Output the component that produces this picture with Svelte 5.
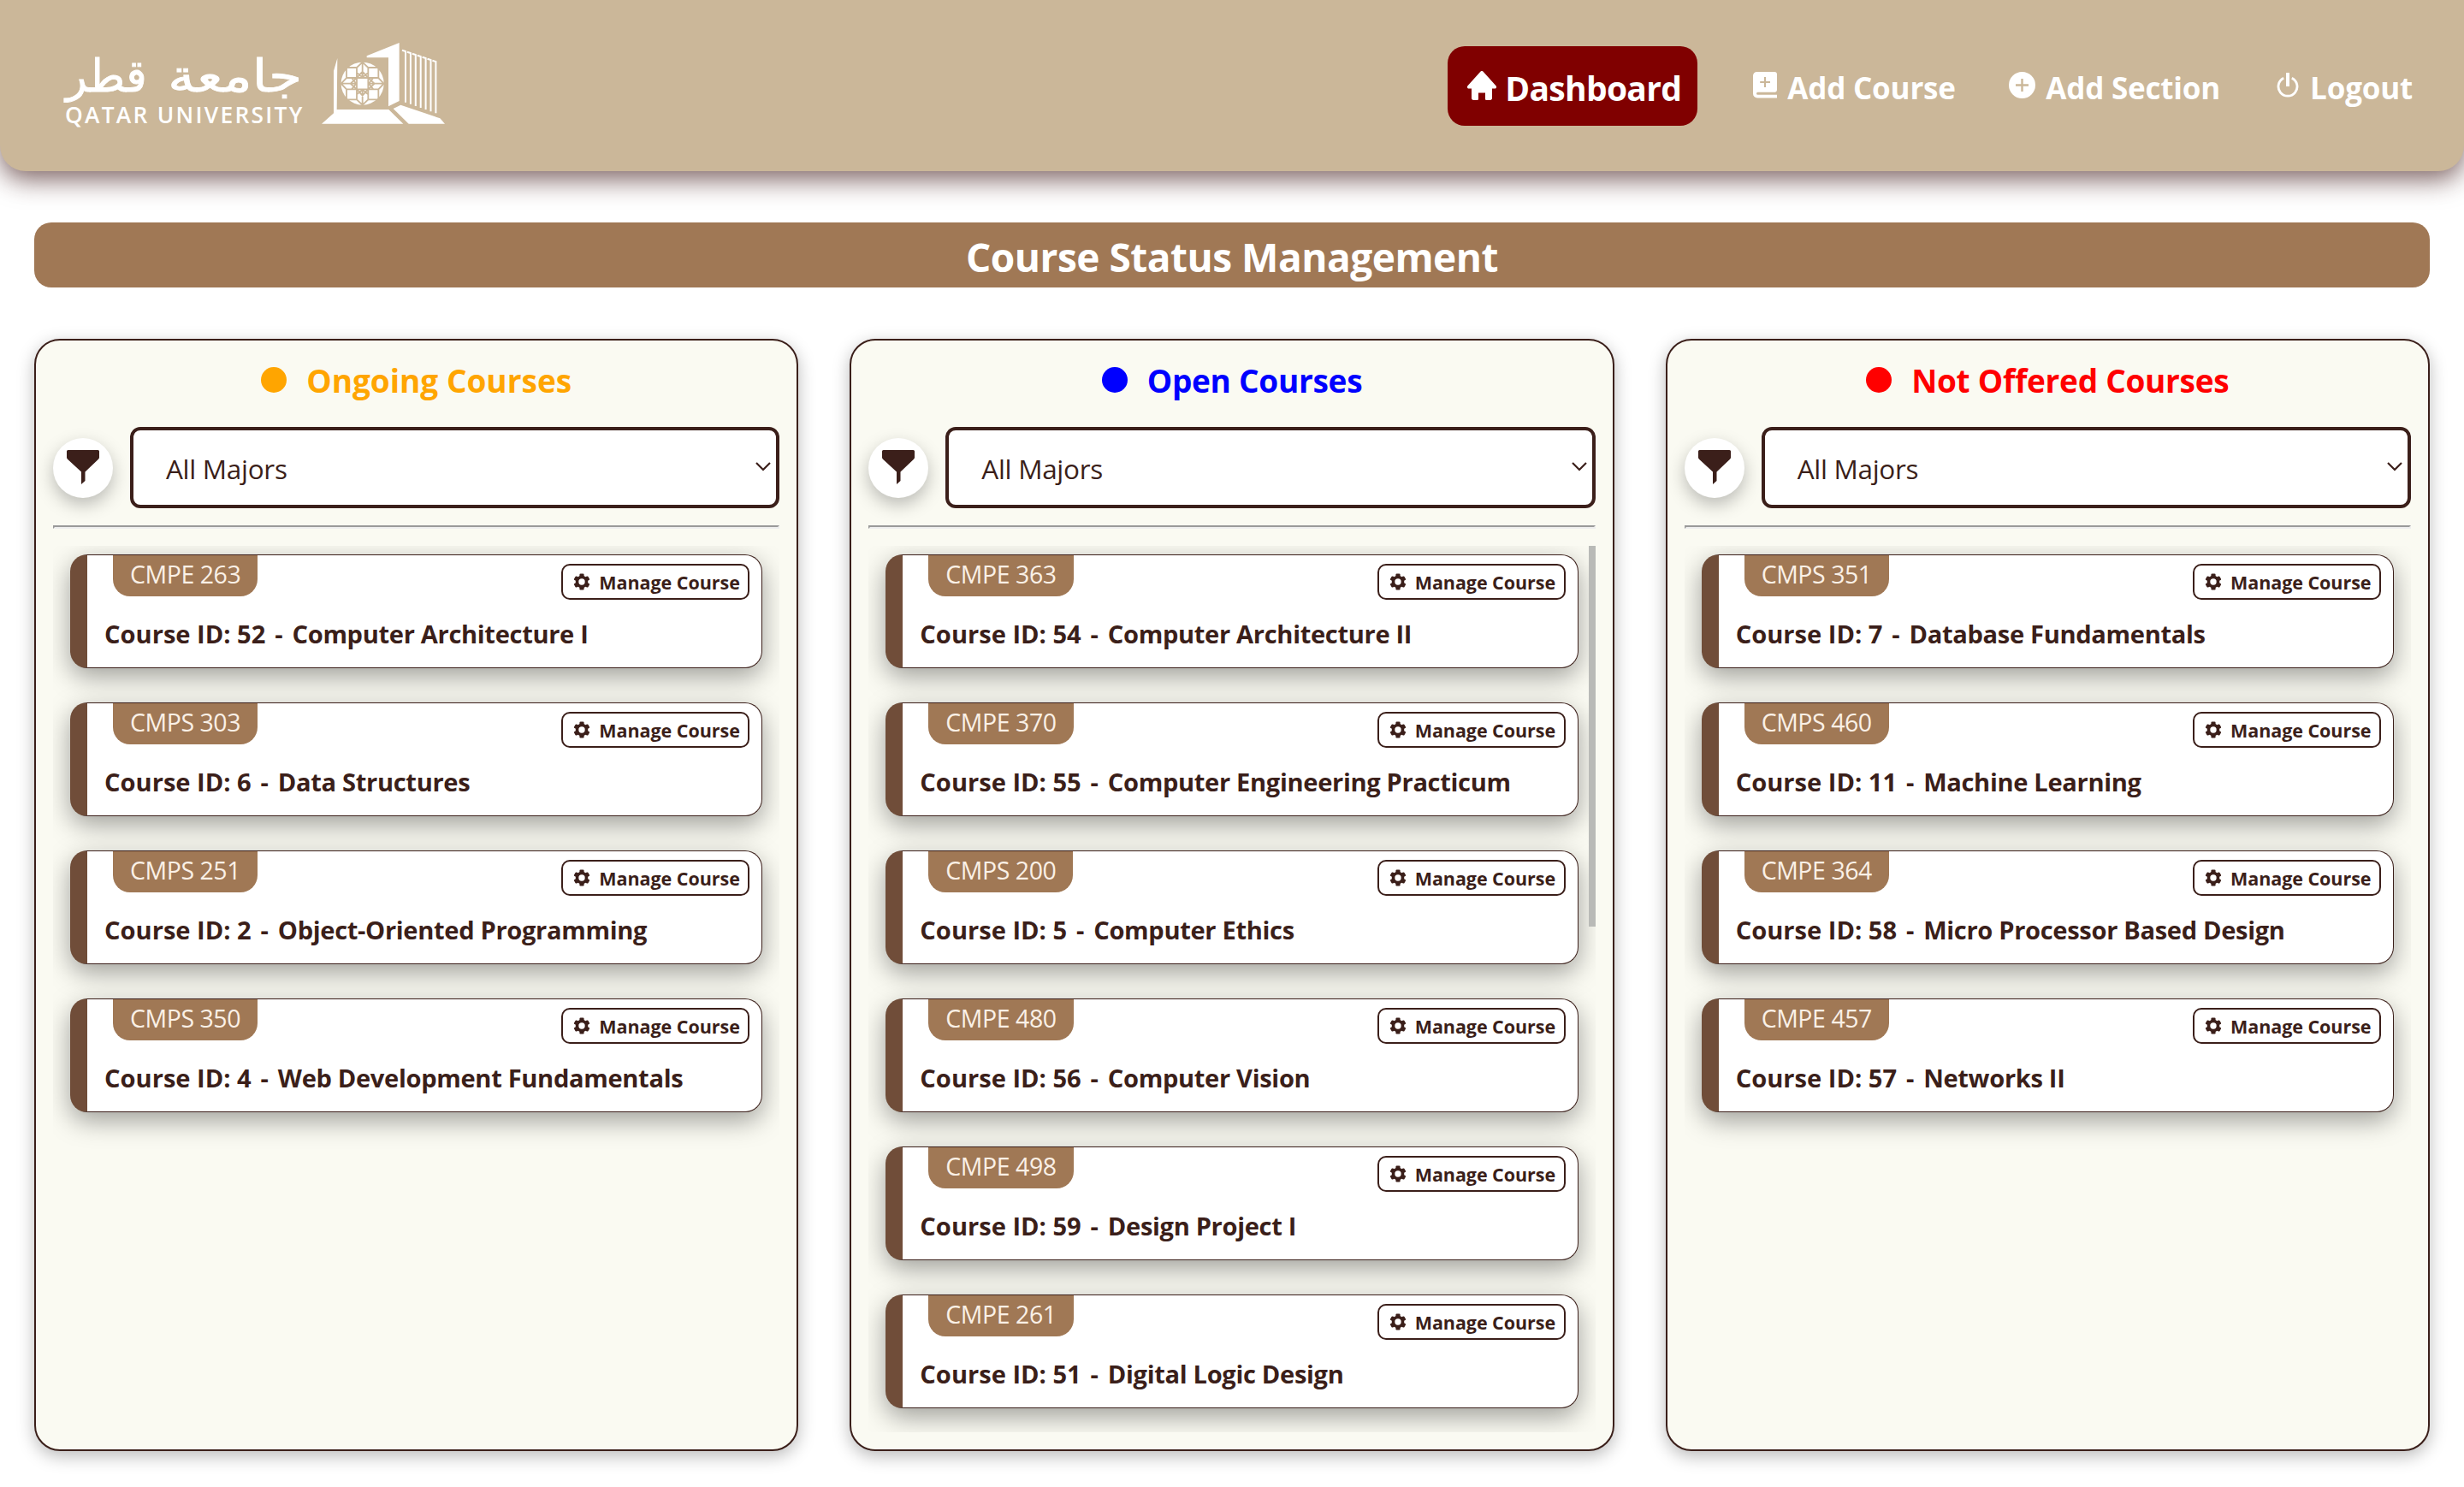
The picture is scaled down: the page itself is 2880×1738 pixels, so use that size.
<script>
  const columns = [
    {
      title: 'Ongoing Courses',
      tone: 'ongoing',
      courses: [
        { code: 'CMPE 263', id: 52, name: 'Computer Architecture I' },
        { code: 'CMPS 303', id: 6, name: 'Data Structures' },
        { code: 'CMPS 251', id: 2, name: 'Object-Oriented Programming' },
        { code: 'CMPS 350', id: 4, name: 'Web Development Fundamentals' }
      ]
    },
    {
      title: 'Open Courses',
      tone: 'open',
      scrolls: true,
      courses: [
        { code: 'CMPE 363', id: 54, name: 'Computer Architecture II' },
        { code: 'CMPE 370', id: 55, name: 'Computer Engineering Practicum' },
        { code: 'CMPS 200', id: 5, name: 'Computer Ethics' },
        { code: 'CMPE 480', id: 56, name: 'Computer Vision' },
        { code: 'CMPE 498', id: 59, name: 'Design Project I' },
        { code: 'CMPE 261', id: 51, name: 'Digital Logic Design' }
      ]
    },
    {
      title: 'Not Offered Courses',
      tone: 'closed',
      courses: [
        { code: 'CMPS 351', id: 7, name: 'Database Fundamentals' },
        { code: 'CMPS 460', id: 11, name: 'Machine Learning' },
        { code: 'CMPE 364', id: 58, name: 'Micro Processor Based Design' },
        { code: 'CMPE 457', id: 57, name: 'Networks II' }
      ]
    }
  ];

  // Facade bars of the emblem, stepping down to the right
  const bars = [0, 1, 2, 3, 4, 5, 6];
  const quarters = [0, 90, 180, 270];
  const teeth = [0, 60, 120];
</script>

<header>
  <svg class="logo" viewBox="65 25 1380 365" role="img" aria-label="Qatar University">
    <g fill="#fff">
      <text class="arabic" x="938" y="263" textLength="470" lengthAdjust="spacingAndGlyphs" direction="rtl">جامعة</text>
      <text class="arabic" x="394" y="263" textLength="284" lengthAdjust="spacingAndGlyphs" direction="rtl">قطر</text>
      <text class="latin" x="107" y="374" textLength="832">QATAR UNIVERSITY</text>
      <path d="M1049 190 1062 145 1060 325H1242L1293 375H1007L1049 338Z" />
      <path d="M1165 137 1279 91V295L1241 314V143H1165Z" />
      <path d="M1258 322 1284 309 1422 356 1439 375H1312Z" />
      <circle cx="1150" cy="234" r="75" />
    </g>
    <g fill="none" stroke="#fff" stroke-width="6">
      {#each bars as i}
        <path d="M{1289 + i * 17.7} {117 + i * 6}l12 4V{300 + i * 6.3}" />
      {/each}
    </g>
    <g transform="translate(1150 234)" fill="none" stroke="#cbb799" stroke-width="5.500">
      {#each quarters as q}
        <g transform="rotate({q})">
          <path d="M-20 -20H20M0 -77V-24M-20 -56 0 -75 20 -56M-20 -38 0 -22 20 -38M-20 -20V-56M20 -20V-56H56V-20M-20 -20 0 -42 20 -20" />
        </g>
      {/each}
    </g>
  </svg>

  <nav>
    <a class="item active" href="#dashboard">
      <svg class="home" viewBox="0 0 34 34" fill="#fff">
        <path d="M15.6.6a2 2 0 0 1 2.8 0L33.5 17.2c1.3 1.4.3 3.3-1.3 3.3H29V31.5c0 1.500-.8 2.500-2.300 2.500H22.700c-1 0-1.700-.6-1.700-1.600V25.500H13v6.900c0 1-.7 1.600-1.700 1.600H7.300C5.800 34 5 33 5 31.500V20.500H1.800C.2 20.500-.8 18.600.5 17.200Z" />
      </svg>
      <span>Dashboard</span>
    </a>
    <a class="item" href="#add-course">
      <svg class="book" viewBox="0 0 28 31">
        <path fill="#fff" fill-rule="evenodd" d="M4.500 0H25a3 3 0 0 1 3 3V21a3 3 0 0 1-2 2.800H5.500a1.500 1.500 0 0 0 0 3H28V30.500H5A5 5 0 0 1 0 25.500V4.500A4.500 4.500 0 0 1 4.500 0ZM13 6V11H8.200V13H13V18H15V13H20V11H15V6Z" />
      </svg>
      <span>Add Course</span>
    </a>
    <a class="item" href="#add-section">
      <svg class="plus" viewBox="0 0 31 31">
        <path fill="#fff" fill-rule="evenodd" d="M15.500 0a15.500 15.500 0 1 1 0 31a15.500 15.500 0 0 1 0-31ZM14.300 8V14.300H8V16.700H14.300V23H16.700V16.700H23V14.300H16.700V8Z" />
      </svg>
      <span>Add Section</span>
    </a>
    <a class="item" href="#logout">
      <svg class="power" viewBox="0 0 26 30" fill="none" stroke="#fff">
        <path stroke-width="4" d="M13 0V16" />
        <path stroke-width="2.800" d="M8.200 6.300A11 11 0 1 0 17.800 6.300" />
      </svg>
      <span>Logout</span>
    </a>
  </nav>
</header>

<main>
  <h1>Course Status Management</h1>

  <div class="board">
    {#each columns as column}
      <section>
        <h2 class={column.tone}><i></i>{column.title}</h2>

        <div class="filter">
          <span class="funnel">
            <svg viewBox="0 0 38 40" fill="#3b1f1a">
              <path d="M1.500 0H36.500A1.500 1.500 0 0 1 38 1.500V8.500Q38 9.800 37 10.800L21.500 25.500V36L17 40V25.500L1 10.800Q0 9.800 0 8.500V1.500A1.500 1.500 0 0 1 1.500 0Z" />
            </svg>
          </span>
          <div class="select" role="combobox" aria-expanded="false" aria-controls="majors" tabindex="0">
            All Majors
            <svg viewBox="0 0 18 11" fill="none" stroke="#3b1f1a" stroke-width="2.200"><path d="M1 1 9 9 17 1" /></svg>
          </div>
        </div>

        <hr />

        <div class="list">
          {#each column.courses as course}
            <article>
              <div class="top">
                <span class="code">{course.code}</span>
                <button>
                  <svg viewBox="-10 -10 20 20">
                    <g fill="#3b1f1a">
                      {#each teeth as t}
                        <rect x="-2.600" y="-9.500" width="5.200" height="19" rx="1.200" transform="rotate({t})" />
                      {/each}
                    </g>
                    <circle r="5.500" fill="#fff" stroke="#3b1f1a" stroke-width="3.600" />
                  </svg>
                  Manage Course
                </button>
              </div>
              <h3>Course ID: {course.id} <span class="dash">-</span> <span class="name">{course.name}</span></h3>
            </article>
          {/each}
          {#if column.scrolls}
            <div class="thumb"></div>
          {/if}
        </div>
      </section>
    {/each}
  </div>
</main>

<style>
  :global(body) {
    background: #fff;
    font-family: 'Open Sans', 'Noto Sans', sans-serif;
    color: #3b1f1a;
  }

  header {
    box-sizing: border-box;
    height: 200px;
    padding: 0 60px 0 61.700px;
    display: flex;
    justify-content: space-between;
    align-items: flex-start;
    background: #cbb799;
    border-radius: 0 0 30px 30px;
    box-shadow: 0 10px 30px rgba(60, 20, 20, 0.65);
  }

  .logo {
    width: 460px;
    height: 121.700px;
    margin-top: 28.300px;
    overflow: visible;
  }

  .arabic {
    font: 400 156px 'DejaVu Sans', sans-serif;
    stroke: #fff;
    stroke-width: 2.500px;
  }

  .latin {
    font: 600 79px 'Open Sans', sans-serif;
  }

  nav {
    display: flex;
    align-items: center;
    padding-top: 54px;
    height: 93px;
  }

  .item {
    display: flex;
    align-items: center;
    height: 93px;
    color: #fff;
    text-decoration: none;
    font-size: 35px;
    font-weight: 700;
    letter-spacing: -0.200px;
    white-space: nowrap;
  }

  .item + .item {
    margin-left: 62.500px;
  }

  .item.active {
    box-sizing: border-box;
    width: 292px;
    padding-left: 23px;
    background: #800000;
    border-radius: 20px;
    font-size: 39px;
    letter-spacing: -0.700px;
  }

  .item span {
    padding-top: 3px;
  }

  .home { width: 34px; height: 34px; margin: 0 10px 2px 0; }
  .book { width: 28px; height: 31px; margin: 0 12.500px 2px 2px; }
  .plus { width: 31px; height: 31px; margin: 0 12px 2px 0; }
  .power { width: 26px; height: 30px; margin: 0 13.500px 2px 3px; }

  main {
    padding: 60px 40px 42px;
  }

  h1 {
    margin: 0;
    height: 76px;
    line-height: 80px;
    border-radius: 20px;
    background: #a07855;
    color: #fff;
    text-align: center;
    font-size: 46px;
    letter-spacing: -0.500px;
  }

  .board {
    margin-top: 60px;
    display: grid;
    grid-template-columns: repeat(3, 1fr);
    gap: 60px;
  }

  section {
    box-sizing: border-box;
    height: 1300px;
    padding: 20px;
    display: flex;
    flex-direction: column;
    border: 2px solid #3b1f1a;
    border-radius: 30px;
    background: #fafaf2;
    box-shadow: 0 6px 20px rgba(0, 0, 0, 0.270);
  }

  h2 {
    margin: 0;
    height: 57px;
    display: flex;
    justify-content: center;
    gap: 23px;
    font-size: 37px;
    line-height: 54px;
    letter-spacing: -0.280px;
  }

  h2 i {
    width: 30px;
    height: 30px;
    margin-top: 11px;
    border-radius: 50%;
    background: currentColor;
  }

  .ongoing { color: #ffa500; letter-spacing: 0; }
  .open { color: #0000ff; }
  .closed { color: #ff0000; }

  .filter {
    margin-top: 24px;
    display: flex;
    align-items: center;
    gap: 20px;
  }

  .funnel {
    width: 70px;
    height: 70px;
    display: grid;
    place-items: center;
    border-radius: 50%;
    background: #fff;
    box-shadow: 0 8px 20px rgba(0, 0, 0, 0.250);
  }

  .funnel svg {
    width: 38px;
    height: 40px;
    margin-bottom: 2px;
  }

  .select {
    box-sizing: border-box;
    flex: 1;
    height: 95px;
    padding: 2px 6px 0 38px;
    display: flex;
    align-items: center;
    justify-content: space-between;
    border: 4px solid #3b1f1a;
    border-radius: 12px;
    background: #fff;
    font-size: 31.500px;
    letter-spacing: -0.300px;
  }

  .select svg {
    width: 18px;
    height: 11px;
    margin-bottom: 4px;
  }

  hr {
    box-sizing: border-box;
    width: 100%;
    height: 4px;
    margin: 20px 0;
    border: 2px solid;
    border-color: #9a9a9a #eeeeee #eeeeee #9a9a9a;
  }

  .list {
    position: relative;
    flex: 1;
    min-height: 0;
    box-sizing: border-box;
    padding: 10px 20px 0;
    overflow: hidden;
    display: flex;
    flex-direction: column;
    gap: 40px;
  }

  /* Scroll handle floats over the right edge of the list */
  .thumb {
    position: absolute;
    top: 0;
    right: 0;
    width: 8px;
    height: 445px;
    background: #b9bab7;
  }

  article {
    box-sizing: border-box;
    flex: none;
    height: 133px;
    border: 1px solid #3b1f1a;
    border-left: 20px solid #704d39;
    border-radius: 20px;
    background: #fff;
    box-shadow: 0 10px 30px rgba(0, 0, 0, 0.360);
  }

  .top {
    display: flex;
    justify-content: space-between;
    padding: 0 14px 0 30px;
  }

  .code {
    height: 48px;
    padding: 0 20px;
    line-height: 45px;
    border-radius: 0 0 20px 20px;
    background: #a07855;
    color: #faf0e6;
    font-size: 28.500px;
    letter-spacing: -0.450px;
  }

  button {
    box-sizing: border-box;
    width: 220px;
    height: 42px;
    margin-top: 10px;
    padding: 0 0 0 12px;
    display: flex;
    align-items: center;
    gap: 10px;
    border: 2px solid #3b1f1a;
    border-radius: 10px;
    background: #fff;
    color: #3b1f1a;
    font: 700 21.500px 'Open Sans', sans-serif;
    letter-spacing: -0.050px;
    white-space: nowrap;
  }

  button svg {
    width: 20px;
    height: 20px;
  }

  h3 {
    margin: 20px 0 0 20px;
    font-size: 29.100px;
    line-height: 40px;
    white-space: nowrap;
  }

  .dash {
    padding: 0 3.300px;
  }

  .name {
    letter-spacing: -0.330px;
  }
</style>
